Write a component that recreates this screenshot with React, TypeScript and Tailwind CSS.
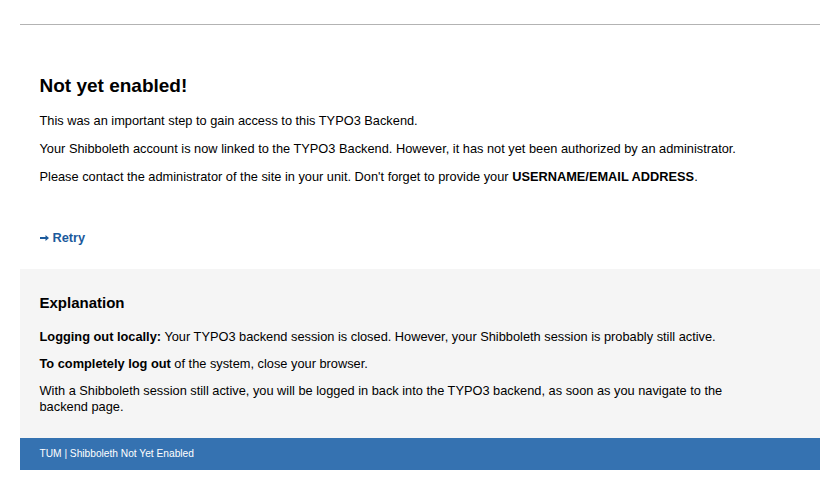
export default function App() {
  return (
    <div className="min-h-screen bg-white font-['Liberation_Sans',Arial,sans-serif] text-black">
      <div className="mx-auto w-[800px] pt-6">
        <div className="border-t border-[#b3b3b3]" />

        {/* main message */}
        <div className="px-5 pt-[49px] pb-[24px]">
          <h1 className="text-[19px] font-bold leading-[24px]">Not yet enabled!</h1>
          <div className="mt-[15px] space-y-[13px] text-[12.8px] leading-[15px]">
            <p>This was an important step to gain access to this TYPO3 Backend.</p>
            <p>
              Your Shibboleth account is now linked to the TYPO3 Backend. However, it has not yet been authorized by
              an administrator.
            </p>
            <p>
              Please contact the administrator of the site in your unit. Don't forget to provide your{" "}
              <strong>USERNAME/EMAIL ADDRESS</strong>.
            </p>
          </div>
          <a href="#" className="mt-[46px] flex items-center gap-[4px] text-[12.8px] font-bold leading-[15px] text-[#1b5a9c]">
            <svg width="9" height="6" viewBox="0 0 9 6" className="mt-px">
              <path d="M0 2h5.5V0L9 3 5.5 6V4H0z" fill="currentColor" />
            </svg>
            Retry
          </a>
        </div>

        {/* explanation */}
        <div className="bg-[#f5f5f5] px-5 pt-[24px] pb-[23px]">
          <h2 className="text-[15px] font-bold leading-[19px]">Explanation</h2>
          <div className="mt-[17px] space-y-[11px] text-[12.8px] leading-[16px]">
            <p>
              <strong>Logging out locally:</strong> Your TYPO3 backend session is closed. However, your Shibboleth
              session is probably still active.
            </p>
            <p>
              <strong>To completely log out</strong> of the system, close your browser.
            </p>
            <p className="max-w-[700px]">
              With a Shibboleth session still active, you will be logged in back into the TYPO3 backend, as soon as you
              navigate to the backend page.
            </p>
          </div>
        </div>

        <footer className="flex h-8 items-center bg-[#3572b1] px-5 text-[10.2px] text-white">
          TUM | Shibboleth Not Yet Enabled
        </footer>
      </div>
    </div>
  );
}
